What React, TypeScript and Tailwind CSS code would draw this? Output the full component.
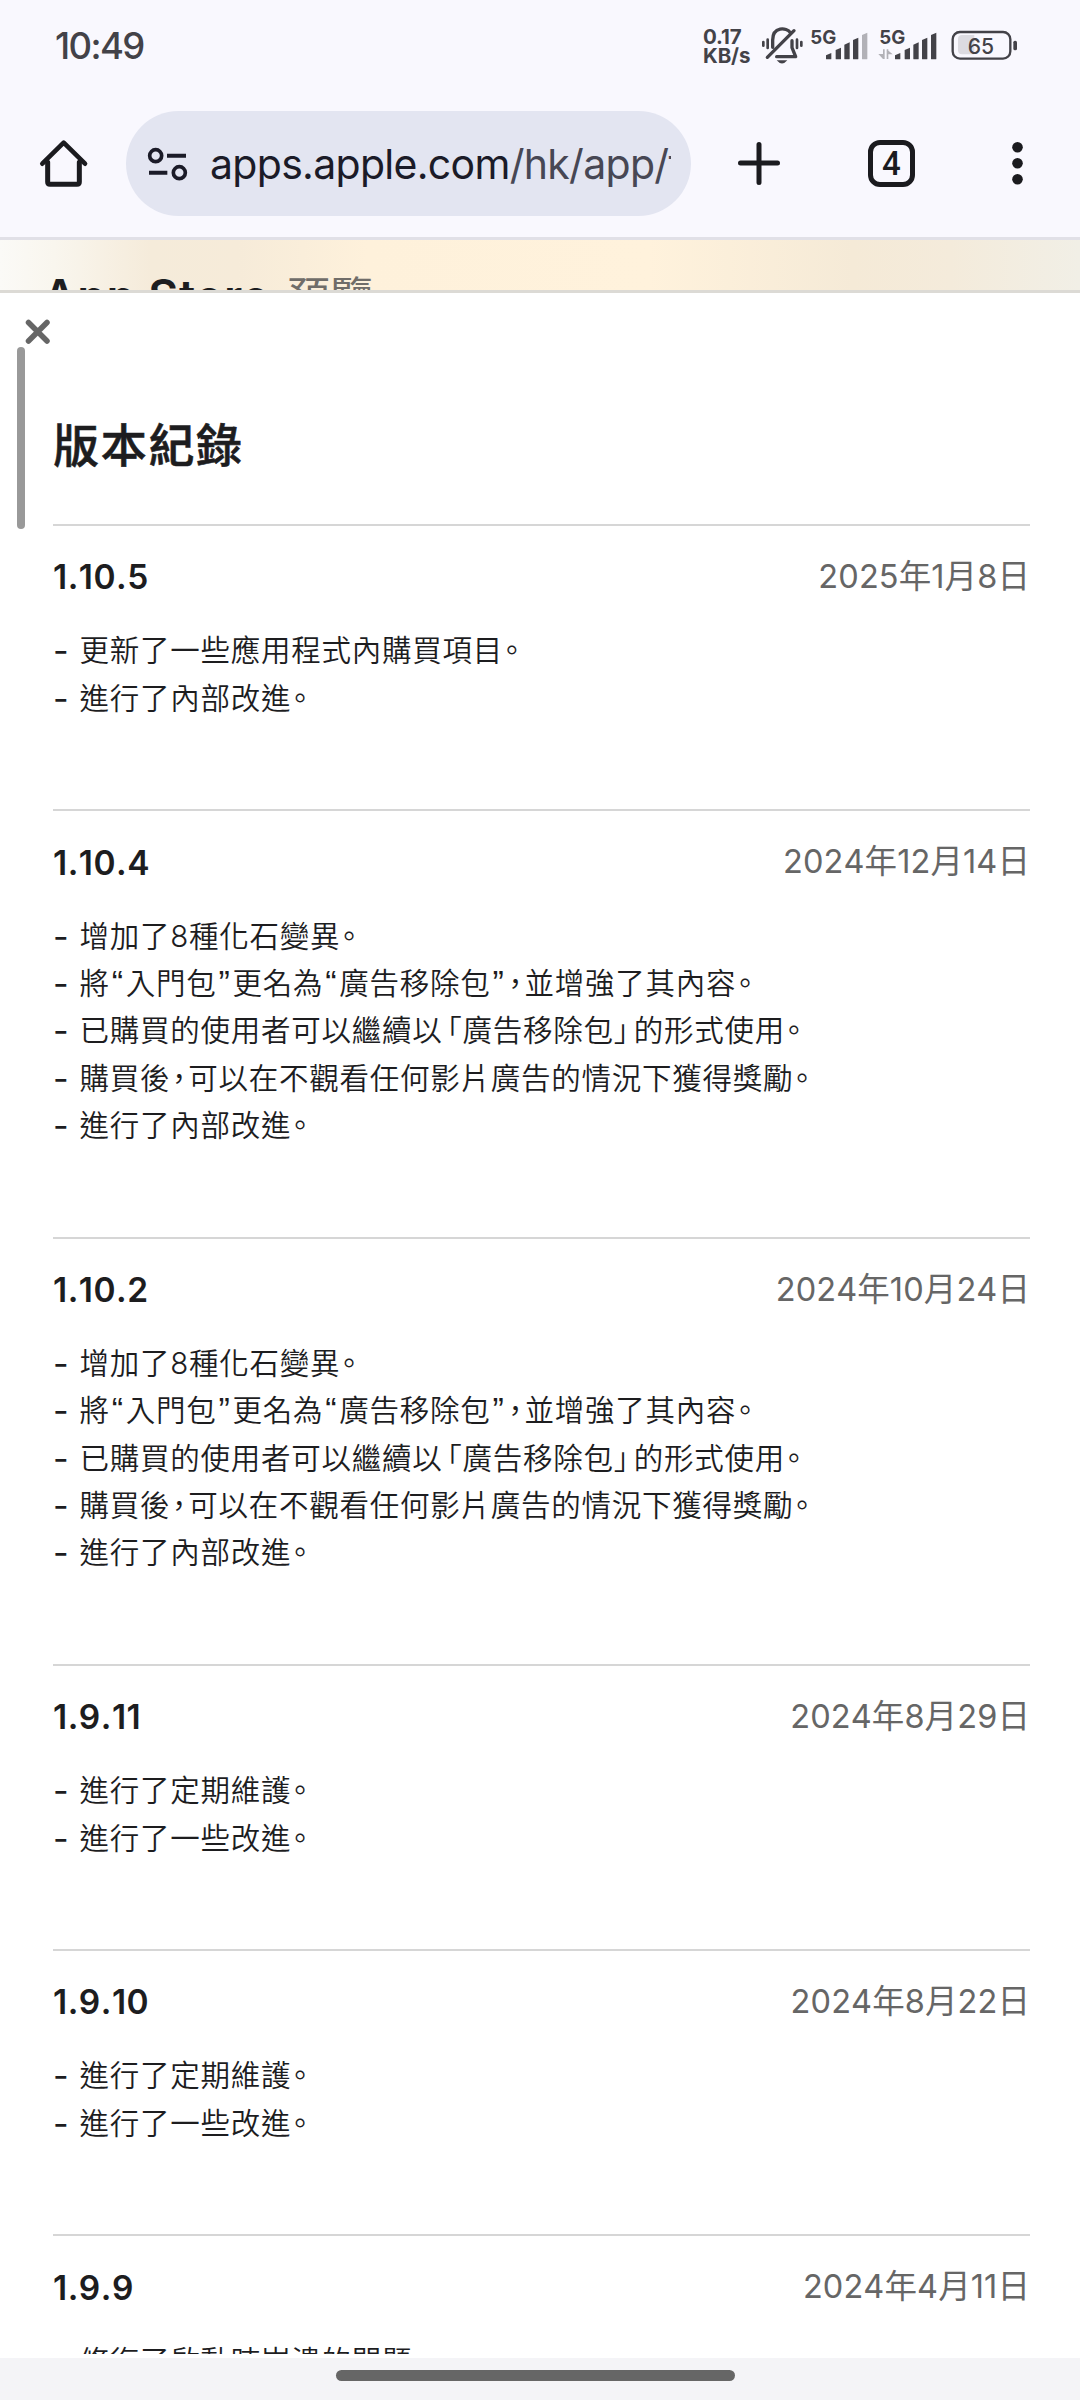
import { ReactNode } from 'react'

interface Release {
    version: string;
    date: string;
    notes: string[];
}

const adNotes = [
    '增加了8種化石變異。',
    '將“入門包”更名為“廣告移除包”，並增強了其內容。',
    '已購買的使用者可以繼續以「廣告移除包」的形式使用。',
    '購買後，可以在不觀看任何影片廣告的情況下獲得獎勵。',
    '進行了內部改進。',
]

const releases: Release[] = [
    { version: '1.10.5', date: '2025年1月8日', notes: ['更新了一些應用程式內購買項目。', '進行了內部改進。'] },
    { version: '1.10.4', date: '2024年12月14日', notes: adNotes },
    { version: '1.10.2', date: '2024年10月24日', notes: adNotes },
    { version: '1.9.11', date: '2024年8月29日', notes: ['進行了定期維護。', '進行了一些改進。'] },
    { version: '1.9.10', date: '2024年8月22日', notes: ['進行了定期維護。', '進行了一些改進。'] },
    { version: '1.9.9', date: '2024年4月11日', notes: ['修復了啟動時崩潰的問題。'] },
]

// narrow punctuation cells
const cells: Record<string, string> = {
    '。': 'w-[18px] justify-center',
    '，': 'w-[18px] justify-center',
    '“': "w-[16px] justify-center font-['Liberation_Sans'] text-[34px]",
    '”': "w-[16px] justify-center font-['Liberation_Sans'] text-[34px]",
    '「': 'w-[20px] justify-end',
    '」': 'w-[20px] justify-start',
}

const Note = ({ text }: { text: string }) => {
    const parts: ReactNode[] = text.split(/([。，“”「」])/).map((part, i) =>
        cells[part] ? <span key={i} className={`inline-flex leading-none ${cells[part]}`}>{part}</span> : part
    )
    return (
        <li className="flex h-[47.4px] items-center whitespace-nowrap leading-[47.4px]">
            <span className="w-[26.5px] shrink-0 text-[34px] font-normal">-</span>
            <span>{parts}</span>
        </li>
    )
}

const BellOff = () => (
    <svg width="49" height="40" viewBox="246 45 147 120" fill="none" stroke="#434248" strokeWidth="10" strokeLinecap="round" strokeLinejoin="round">
        <path d="M278 112V90C278 49 320 51 331 68M336 92V113L347 140H290M342 62L262 142" />
        <path d="M263 89V114M351 89V114" strokeWidth="8" />
        <path d="M250 96V107M364 96V107" strokeWidth="8" />
        <path d="M290 151H322Q306 170 290 151Z" fill="#434248" stroke="none" />
    </svg>
)

const bars = [
    [438, 129], [467, 113], [493, 97], [519, 83], [546, 68],
]

const Signal = ({ weak }: { weak?: boolean }) => (
    <svg width="69" height="40" viewBox="393 45 207 120" fill="#434248" overflow="visible">
        <text x="391" y="102" fontSize="57" fontWeight="700" textLength="78" lengthAdjust="spacingAndGlyphs">5G</text>
        {bars.map(([x, y], i) => (
            <path key={x} d={`M${x} 146V${y + 7}L${x + 16} ${y}V146Q${x + 16} 148 ${x + 14} 148H${x + 2}Q${x} 148 ${x} 146Z`} fill={weak && i === 4 ? '#b2b1b7' : '#434248'} />
        ))}
        {!weak && (
            <path d="M402 118V147H407V118ZM402 147L388 132H402ZM413 147V118H418V147ZM413 118L431 133H417Z" fill="#b2b1b7" />
        )}
    </svg>
)

const Battery = () => (
    <svg width="68" height="40" viewBox="810 45 204 120">
        <path d="M843 75H880V133H843Q831 133 831 121V87Q831 75 843 75Z" fill="#dcdbe1" />
        <rect x="815" y="66" width="173" height="80" rx="22" fill="none" stroke="#434248" strokeWidth="7" />
        <rect x="997" y="92" width="11" height="29" rx="5" fill="#434248" />
        <text x="860" y="131" fontSize="66" fontWeight="500" fill="#434248" textLength="79" lengthAdjust="spacingAndGlyphs">65</text>
    </svg>
)

const StatusBar = () => (
    <div className="flex h-[90px] items-start pt-[25px] text-[#434248]">
        <div className="w-[703px] pl-[55px] text-[36.5px] font-medium leading-[42px] tracking-[-1.6px]">10:49</div>
        <div className="w-[59px] pt-[3px] text-[20.5px] font-bold leading-[18.5px] tracking-[-0.1px]">
            <div>0.17</div>
            <div>KB/s</div>
        </div>
        <BellOff />
        <Signal weak />
        <div className="w-[71px]">
            <Signal />
        </div>
        <Battery />
    </div>
)

const Toolbar = () => (
    <div className="flex h-[147px] items-start">
        <svg className="mt-[49px] ml-[39px]" width="50" height="50" viewBox="117 417 150 150" fill="none" stroke="#1b1b1f" strokeLinejoin="round" strokeLinecap="round">
            <path d="M143 487V546Q143 553 150 553H231Q238 553 238 546V487" strokeWidth="15" />
            <path d="M127 491L191 428L255 491" strokeWidth="14" />
        </svg>
        <div className="ml-[37px] mt-[21px] flex h-[105px] w-[565px] items-center rounded-full bg-[#e3e5f1] pl-[21px] pr-[20px]">
            <svg className="shrink-0" width="42" height="36" viewBox="441 436 126 108" fill="none" stroke="#1b1b28" strokeWidth="11">
                <circle cx="467" cy="465" r="18" />
                <circle cx="538" cy="516" r="18" />
                <path d="M501 465H558M447 516H502" strokeWidth="12" />
            </svg>
            <div className="ml-[21px] w-[461px] overflow-hidden whitespace-nowrap text-[41px] leading-[60px] tracking-[-0.7px] text-[#1b1b28]">
                apps.apple.com<span className="text-[#474754]">/hk/app/f</span>
            </div>
        </div>
        <svg className="mt-[51px] ml-[46px]" width="44" height="44" viewBox="0 0 44 44" stroke="#1b1b1f" strokeWidth="5" strokeLinecap="round">
            <path d="M22 3.5V41.5M3.5 22H40.5" />
        </svg>
        <div className="ml-[87px] mt-[50px] flex h-[47px] w-[47px] items-center justify-center rounded-[12px] border-[5px] border-[#1b1b1f] font-[Roboto] text-[33px] font-medium leading-none text-[#1b1b1f]">4</div>
        <svg className="ml-[95px] mt-[48px]" width="16" height="50" viewBox="0 0 16 50" fill="#1b1b1f">
            <circle cx="7.5" cy="9.3" r="5.3" />
            <circle cx="7.5" cy="25.3" r="5.3" />
            <circle cx="7.5" cy="41.3" r="5.3" />
        </svg>
    </div>
)

const App = () => {
    return (
        <div className="flex h-[2400px] w-[1080px] flex-col overflow-hidden bg-[#f9f8fe] font-[Inter,'Noto_Sans_CJK_TC',sans-serif]">
            <StatusBar />
            <Toolbar />
            <div className="h-[56px] shrink-0 overflow-hidden border-y-[3px] border-t-[#e1e0e7] border-b-[#dcdad5] bg-[linear-gradient(90deg,#fbfaf7_0%,#f9f6ee_5%,#f5ebda_14%,#f6ebd9_22%,#fef1db_34%,#fff2dc_60%,#f5ead7_79%,#f4ebdb_88%,#f1efe6_100%)]">
                <div className="flex items-baseline whitespace-nowrap pl-[43px] pt-[28px] leading-[56px]">
                    <span className="text-[46px] font-semibold tracking-[0.7px] text-[#1d1d1f]">App Store</span>
                    <span className="ml-[17px] text-[43px] text-[#706d69]">預覽</span>
                </div>
            </div>
            <div className="relative h-[2061px] shrink-0 overflow-hidden bg-white">
                <svg className="absolute left-[25px] top-[26px]" width="26" height="26" viewBox="0 0 26 26" stroke="#666" strokeWidth="5.5" strokeLinecap="round">
                    <path d="M3.5 3.5L22 22M22 3.5L3.5 22" />
                </svg>
                <div className="absolute left-[17px] top-[54px] h-[182px] w-[8px] rounded-full bg-[#999]" />
                <div className="ml-[53px] w-[977px] text-[#1d1d1f]">
                    <h2 className="h-[231px] pt-[117px] text-[46px] font-medium leading-[70px] tracking-[1.7px] [-webkit-text-stroke:0.6px_#1d1d1f]">版本紀錄</h2>
                    {releases.map((release) => (
                        <section key={release.version} className="border-t-2 border-[#d6d6d6] pb-[87px]">
                            <div className="mt-[26.5px] flex h-[50px] items-center justify-between [font-kerning:none]">
                                <h3 className="text-[33.5px] font-semibold tracking-[0.5px]">{release.version}</h3>
                                <time className="text-[32.5px] font-normal tracking-[0.1px] text-[#666]">{release.date}</time>
                            </div>
                            <ul className="mt-[24.9px] text-[29.5px] font-[350] tracking-[0.75px]">
                                {release.notes.map((note) => <Note key={note} text={note} />)}
                            </ul>
                        </section>
                    ))}
                </div>
            </div>
            <div className="h-[4px] shrink-0 bg-white" />
            <div className="flex flex-1 bg-[#f4f4f7] pl-[336px] pt-[12px]">
                <div className="h-[11px] w-[399px] rounded-full bg-[#666]" />
            </div>
        </div>
    )
}

export default App
